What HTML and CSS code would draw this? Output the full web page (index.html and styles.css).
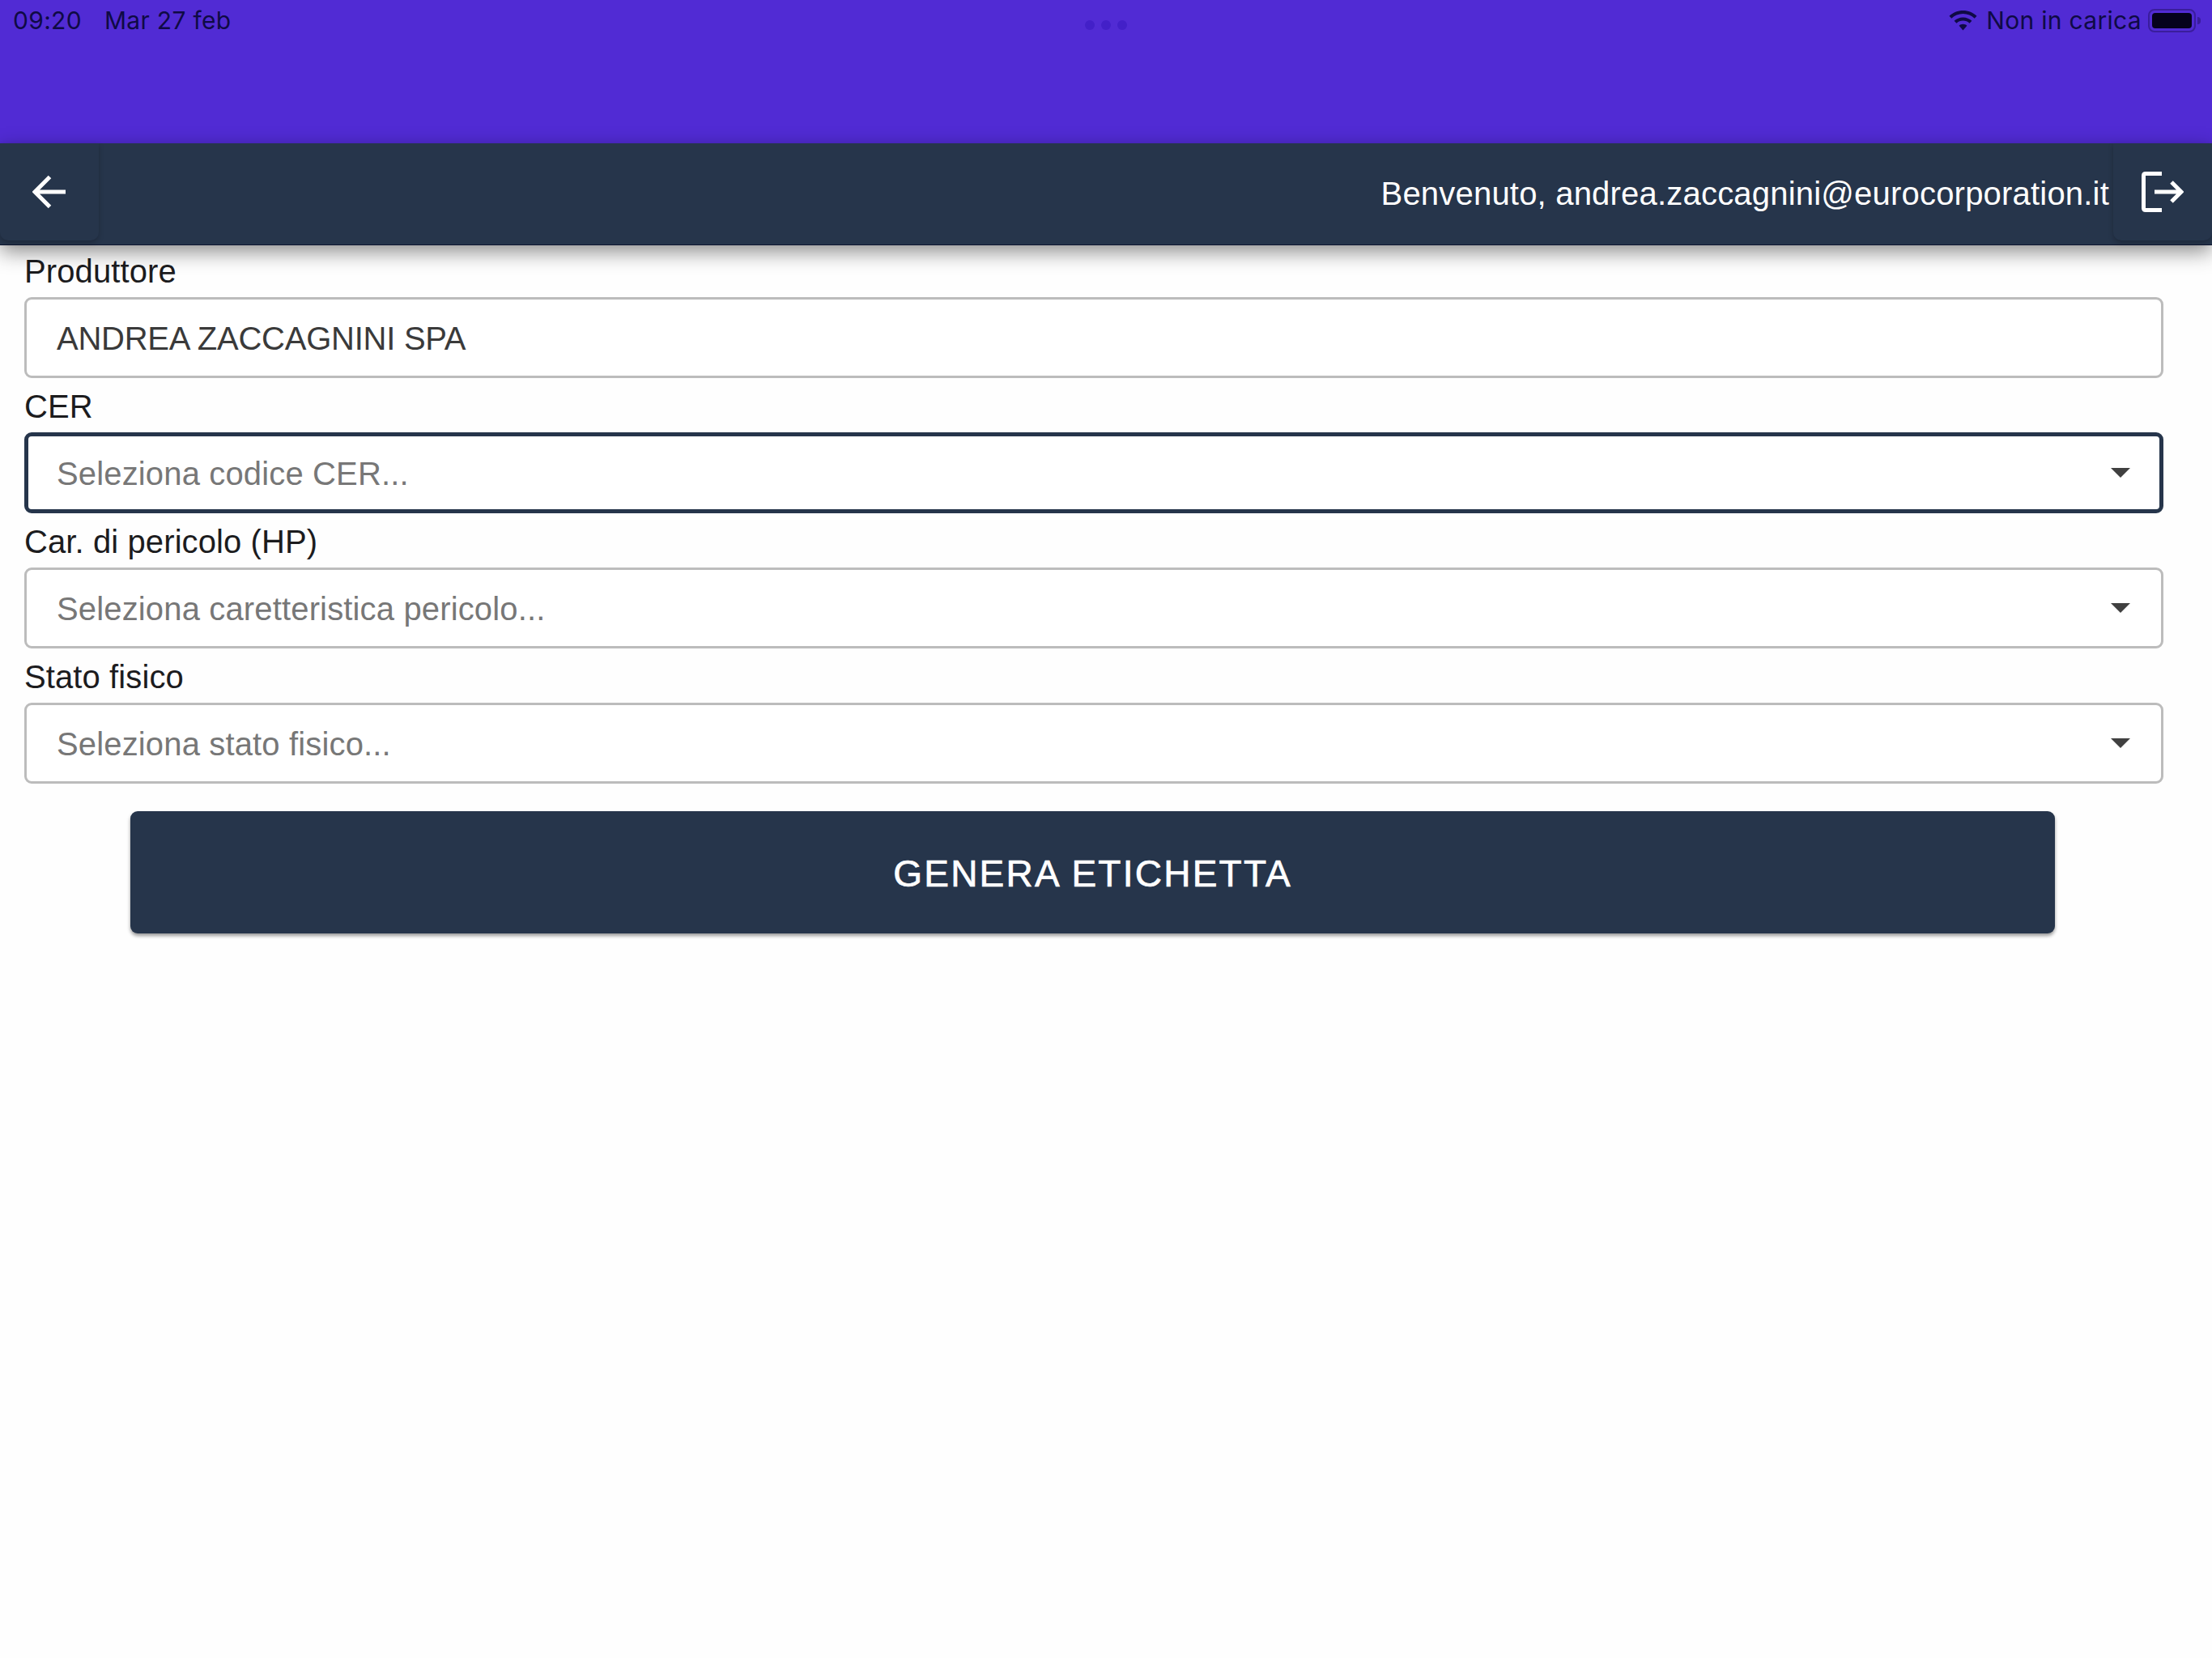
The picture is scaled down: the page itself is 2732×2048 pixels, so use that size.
FILE: index.html
```html
<!DOCTYPE html>
<html lang="it">
<head>
<meta charset="utf-8">
<title>Genera etichetta</title>
<link rel="stylesheet" href="styles.css">
</head>
<body>
<header class="statusbar">
  <div class="status-left"><span>09:20</span><span>Mar 27 feb</span></div>
  <div class="dots"><i></i><i></i><i></i></div>
  <div class="status-right">
    <svg class="wifi" viewBox="0 0 35 25" aria-hidden="true"><path d="M17.5 0C11 0 5 2.500 0.500 6.800L3.300 9.800C7 6.200 12 4.100 17.500 4.100S28 6.200 31.700 9.800L34.500 6.800C30 2.500 24 0 17.500 0Z"/><path d="M17.500 8.400C13.300 8.400 9.500 10 6.600 12.800L9.500 15.800C11.600 13.800 14.400 12.600 17.500 12.600S23.400 13.800 25.500 15.800L28.400 12.800C25.500 10 21.700 8.400 17.500 8.400Z"/><path d="M17.500 16.800C15.600 16.800 13.900 17.500 12.600 18.700L17.500 24.500L22.400 18.700C21.100 17.500 19.400 16.800 17.500 16.800Z"/></svg>
    <span class="charge">Non in carica</span>
    <span class="battery"><span class="battery-level"></span></span>
  </div>
</header>
<nav class="toolbar">
  <button class="tool-btn" type="button" aria-label="Indietro">
    <svg class="arrow" viewBox="0 0 42 42" aria-hidden="true"><path d="M41 21H3M21.500 2.500L3 21L21.500 39.500"/></svg>
  </button>
  <span class="welcome">Benvenuto, andrea.zaccagnini@eurocorporation.it</span>
  <button class="tool-btn" type="button" aria-label="Esci">
    <svg class="logout" viewBox="0 0 52 50" aria-hidden="true"><path class="door" d="M25 2.500H5Q2.500 2.500 2.500 5V45Q2.500 47.500 5 47.500H25"/><path d="M16 25H49M37 13L49 25L37 37"/></svg>
  </button>
</nav>
<main class="form">
  <div class="field">
    <label class="label">Produttore</label>
    <div class="control"><span class="value">ANDREA ZACCAGNINI SPA</span></div>
  </div>
  <div class="field">
    <label class="label">CER</label>
    <div class="control focused"><span class="placeholder">Seleziona codice CER...</span><span class="caret"></span></div>
  </div>
  <div class="field">
    <label class="label">Car. di pericolo (HP)</label>
    <div class="control"><span class="placeholder">Seleziona caretteristica pericolo...</span><span class="caret"></span></div>
  </div>
  <div class="field">
    <label class="label">Stato fisico</label>
    <div class="control"><span class="placeholder">Seleziona stato fisico...</span><span class="caret"></span></div>
  </div>
  <button class="generate" type="button">GENERA ETICHETTA</button>
</main>
</body>
</html>
```

FILE: styles.css
```css
* { box-sizing: border-box; }
html, body { margin: 0; height: 100%; }
body {
  background: #fefefe;
  color: #1c1c1e;
  font-family: "Liberation Sans", Arial, sans-serif;
  overflow: hidden;
}
.statusbar {
  height: 177px;
  background: #512bd4;
  color: #0f0a45;
  font-family: Inter, "Noto Sans", sans-serif;
  font-size: 30px;
  letter-spacing: .3px;
  display: grid;
  grid-template-columns: 1fr auto 1fr;
  align-items: start;
  padding: 8px 20px 0 16px;
}
.status-left { display: flex; gap: 28px; line-height: 34px; }
.dots { display: flex; gap: 8px; margin: 17px 0 0 3px; }
.dots i { width: 12px; height: 12px; border-radius: 50%; background: #4320c8; }
.status-right { display: flex; justify-content: flex-end; align-items: flex-start; line-height: 34px; }
.wifi { width: 35px; height: 25px; margin-top: 5px; fill: #0f0a45; }
.charge { margin-left: 11px; }
.battery {
  position: relative;
  width: 59px;
  height: 29px;
  margin: 3px 0 0 8px;
  border: 2px solid #3a1d9c;
  border-radius: 8px;
  padding: 3px;
  display: flex;
}
.battery::after {
  content: "";
  position: absolute;
  right: -8px;
  top: 8px;
  width: 4px;
  height: 9px;
  border-radius: 0 4px 4px 0;
  background: #3a1d9c;
}
.battery-level { flex: 1; background: #05021c; border-radius: 4px; }
.toolbar {
  height: 126px;
  background: #26354b;
  display: flex;
  align-items: flex-start;
  box-shadow: 0 8px 24px rgba(0, 0, 0, .45);
  position: relative;
  border-bottom: 1px solid #0d1530;
}
.tool-btn {
  width: 122px;
  height: 120px;
  border: 0;
  padding: 0;
  background: #26354b;
  border-radius: 0 0 10px 10px;
  box-shadow: 0 3px 6px rgba(0, 0, 0, .22);
  display: flex;
  align-items: center;
  justify-content: center;
}
.arrow { width: 42px; height: 42px; fill: none; stroke: #fff; stroke-width: 5; }
.logout { width: 52px; height: 50px; fill: none; stroke: #fff; stroke-width: 5; }
.welcome {
  margin-left: auto;
  margin-right: 5px;
  color: #fff;
  font-size: 40px;
  letter-spacing: .2px;
  line-height: 124px;
  white-space: nowrap;
}
.form { padding: 0 60px 0 30px; display: flex; flex-direction: column; }
.field { display: flex; flex-direction: column; }
.field + .field { margin-top: 3px; }
.label { height: 64px; line-height: 64px; font-size: 40px; letter-spacing: .1px; color: #1c1c1e; }
.control {
  height: 100px;
  border: 3px solid #bcbcbc;
  border-radius: 9px;
  display: flex;
  align-items: center;
  justify-content: space-between;
  padding: 3px 38px 0 37px;
  font-size: 40px;
  background: #fff;
}
.control.focused { border: 5px solid #26354b; padding: 3px 36px 0 35px; }
.value { color: #3a3a3a; letter-spacing: -.25px; }
.placeholder { color: #777; letter-spacing: .15px; }
.caret {
  width: 0;
  height: 0;
  margin-top: -3px;
  border-left: 12.500px solid transparent;
  border-right: 12.500px solid transparent;
  border-top: 12.500px solid #404040;
}
.generate {
  align-self: center;
  width: 2377px;
  height: 151px;
  margin: 34px 3px 0 0;
  padding: 2px 0 0;
  border: 0;
  border-radius: 9px;
  background: #26354b;
  color: #fff;
  font-family: inherit;
  font-size: 46px;
  letter-spacing: 2.250px;
  -webkit-text-stroke: .7px #fff;
  box-shadow: 0 3px 4px rgba(0, 0, 0, .4);
}
```
